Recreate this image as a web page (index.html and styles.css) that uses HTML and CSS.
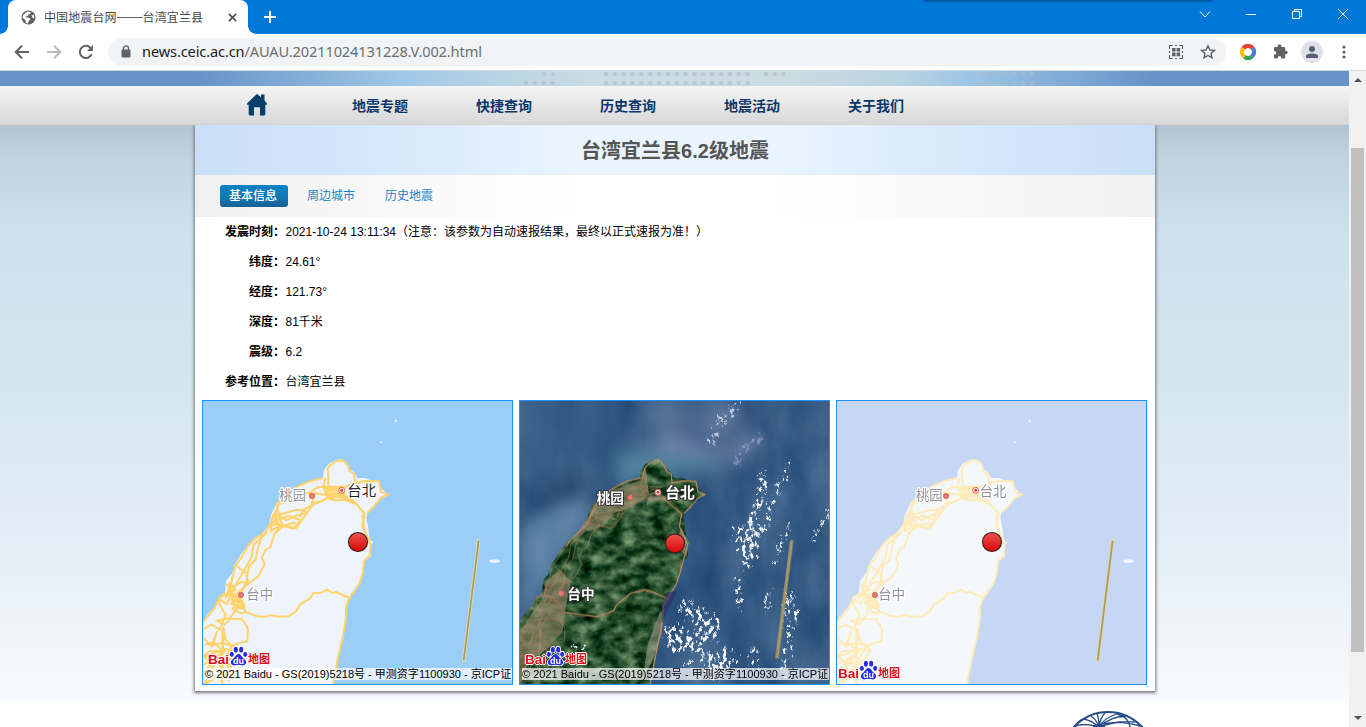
FILE: index.html
```html
<!DOCTYPE html>
<html lang="zh-CN">
<head>
<meta charset="utf-8">
<title>中国地震台网——台湾宜兰县</title>
<link rel="stylesheet" href="styles.css">
</head>
<body>
<svg class="defs" width="0" height="0" aria-hidden="true">
  <defs>
    <path id="land" d="M0 700L12 672 25 650 45 628 60 600 78 583 81 548 100 525 106 503 125 470 148 440 165 421 190 405 210 380 216 350 232 318 255 290 300 265 330 252 372 240 374 218 388 198 410 187 428 184 445 194 450 212 465 222 475 240 500 240 515 247 540 248 547 272 568 290 545 302 525 325 505 345 502 360 508 390 512 425 523 433 514 445 516 475 498 490 492 530 480 555 455 590 448 615 440 640 443 660 436 690 430 730 416 785 410 820 402 860 402 900 0 900Z"/>
    <g id="roads">
      <path d="M402 860L410 815 417 780 432 715 441 660 441 625 452 600 480 560 492 525 495 490 512 472 515 440 500 402 490 385 497 348 470 315 440 300 402 295"/>
      <path d="M505 345L525 325 545 300 568 290 546 282 540 250 500 249 468 256 466 229 450 218 448 204 437 190 418 187 396 199 386 211 388 238 388 262"/>
      <path d="M468 256L440 266 390 266 355 268 330 286 300 285 270 306 240 318 226 349 213 380 196 405 168 422 149 441 126 480 108 506 100 542 90 570 80 602"/>
      <path d="M372 240L332 250 302 262 270 285 232 318M330 290L350 286 385 292 410 308 385 300 343 320 315 335 290 336 240 350 232 318"/>
      <path d="M342 320L320 350 292 390 254 383 226 408 214 448 200 455 188 480 197 498 178 535 155 551 126 576 100 602"/>
      <path d="M226 408L246 382 284 392 304 366 270 354 240 360 252 382 216 376 248 357 222 350 264 366 292 352 324 345 310 335 304 360"/>
      <path d="M190 410L178 445 170 485 150 505 142 550 124 594 140 645"/>
      <path d="M205 403L164 440 158 478 134 520 116 550 98 583 85 560 106 565 128 551 147 556 142 525 115 506"/>
      <path d="M452 600L410 582 400 585 385 575 367 584 343 586 332 602 302 620 292 639 268 655 240 656 215 651 202 656 175 655 145 643 126 646 100 632 126 610 102 606"/>
      <path d="M12 694L37 680 62 694 80 650 60 617 62 596 85 590 110 600 138 626 114 630 93 660 52 668 76 680 94 662 130 664 147 692 145 730 121 735 98 744 78 722 74 690 72 760 45 785 16 822 41 850"/>
      <path d="M12 718L38 746 54 700 43 740 70 735 100 743 113 756 96 782 75 797 43 796 14 776 46 766 80 753 110 760"/>
      <path d="M80 756L52 790 28 840 12 860M75 790L98 804 77 835 46 818 33 798M18 740L45 733 70 758 30 760 12 775M85 575L107 600 96 618 128 625 120 601 94 592 84 618 58 602M12 672L45 632 62 600 80 585M70 690V860M98 744L75 790 110 840M12 800L50 780 90 850M40 820L72 812 66 850M16 860L60 830"/>
      <path d="M390 266L400 292 425 282 448 302 408 284 387 300 378 282 405 270 438 292 465 310M350 282L338 316 368 310 386 299M395 262L385 290 400 305 440 306 470 318M372 272L400 280 420 270 438 268M380 240L374 262 392 276"/>
    </g>
    <path id="road-knots" d="M235 330L228 370 244 384 262 380M222 350L214 400 236 386 290 374M100 535L92 590 110 612 130 608 134 632 110 626 98 604 116 598 138 622M88 555L110 575 90 585 110 590M385 270L420 272 436 285 404 298 385 285M490 350L496 400M205 385L226 382 240 368"/>
    <g id="roads-short">
      <path d="M505 345L525 325 545 300 568 290 546 282 540 250 500 249 468 256 466 229 450 218 437 190 418 187 396 199 386 211 380 240 332 250 270 285 240 318 213 380 165 423 150 446"/>
      <path d="M452 600L410 582 385 575 343 586 302 620 292 639 240 656 145 643M402 860L441 660 441 625 480 560 492 525 515 440 490 385 497 348 440 300"/>
    </g>
    <g id="hq">
      <path d="M839 428L794 787" stroke="#e4d9a2" stroke-width="10" stroke-linecap="square"/>
      <path d="M839 428L794 787" stroke="#a99a60" stroke-width="5"/>
    </g>
    <linearGradient id="red" x2="0" y2="1"><stop stop-color="#ee5550"/><stop offset="1" stop-color="#d60505"/></linearGradient>
    <g id="quake"><circle cx="477" cy="432" r="28.5" fill="url(#red)" stroke="#40201f" stroke-width="3.5"/></g>
    <g id="capital"><circle r="9" fill="#fff" stroke="#e45b55" stroke-width="3"/><circle r="4.5" fill="#e53c37"/></g>
    <g id="city"><circle r="8" fill="#e9776f" stroke="#c65d56" stroke-width="2"/></g>
    <symbol id="paw" viewBox="0 0 56 60">
      <g stroke="#fff" stroke-width="5" paint-order="stroke" fill="#282ce0" stroke-linejoin="round">
        <path d="M28 24C20 24 18 34 10 40C0 48 6 60 18 58C25 56 30 56 38 58C50 60 56 48 46 40C38 34 36 24 28 24Z"/>
        <ellipse cx="8" cy="25" rx="6" ry="8"/><ellipse cx="20" cy="11" rx="6" ry="8.5"/><ellipse cx="36" cy="11" rx="6" ry="8.5"/><ellipse cx="48" cy="25" rx="6" ry="8"/>
      </g>
    </symbol>
    <filter id="forest" x="0" y="0" width="1" height="1" color-interpolation-filters="sRGB">
      <feTurbulence type="fractalNoise" baseFrequency=".022 .034" numOctaves="5" seed="8"/>
      <feColorMatrix values=".85 0 0 0 -.26  .8 0 0 0 -.08  .7 0 0 0 -.16  0 0 0 0 1"/>
      <feComposite in2="SourceGraphic" operator="in"/>
    </filter>
    <filter id="seanoise" x="0" y="0" width="1" height="1" color-interpolation-filters="sRGB">
      <feTurbulence type="fractalNoise" baseFrequency=".008 .004" numOctaves="4" seed="4"/>
      <feColorMatrix values=".25 0 0 0 .09  .22 0 0 0 .25  .18 0 0 0 .43  0 0 0 0 1"/>
    </filter>
    <filter id="soft" x="-50%" y="-50%" width="200%" height="200%" color-interpolation-filters="sRGB"><feGaussianBlur stdDeviation="22"/></filter>
    <filter id="wisp" x="-40%" y="-40%" width="180%" height="180%" color-interpolation-filters="sRGB">
      <feTurbulence type="fractalNoise" baseFrequency=".09 .06" numOctaves="4" seed="5" result="n"/>
      <feColorMatrix in="n" values="0 0 0 0 0 0 0 0 0 0 0 0 0 0 0 8 0 0 0 -3.9" result="m"/>
      <feDisplacementMap in="SourceGraphic" in2="n" scale="50" xChannelSelector="G" yChannelSelector="B" result="d"/>
      <feComposite in="d" in2="m" operator="in"/>
    </filter>
  </defs>
</svg>

<div class="browser">
  <div class="tabstrip">
    <div class="tab">
      <svg class="favicon" viewBox="0 0 16 16"><circle cx="8" cy="8" r="7.5" fill="#5f6368"/><path d="M7 1.700L10.800 2.600 9.400 4.500 7.800 4.700 7.200 6.300 4.800 6.800 6 8.100 8.800 8.200 9.900 10 8.200 11.600 7.400 14.300 4.800 13.600 5.300 11.400 3.300 9.300 1.600 8.500 2.200 5.400zM11.300 5.700L13.600 5.100 14.300 8.700 12.200 8.200z" fill="#fff"/></svg>
      <span class="tab-title">中国地震台网<span class="dash"></span>台湾宜兰县</span>
      <svg class="tab-x" viewBox="0 0 10 10"><path d="M1 1l8 8M9 1L1 9" stroke="#45494d" stroke-width="1.700"/></svg>
    </div>
    <svg class="plus" viewBox="0 0 12 12"><path d="M6 0v12M0 6h12" stroke="#fff" stroke-width="2"/></svg>
    <div class="window-controls">
      <svg viewBox="0 0 12 12"><path d="M1 3.500L6 9l5-5.500" /></svg>
      <svg viewBox="0 0 12 12"><path d="M1 6.500h10"/></svg>
      <svg viewBox="0 0 12 12"><path d="M1.500 3.500h7v7h-7zM3.500 3.500v-2h7v7h-2"/></svg>
      <svg viewBox="0 0 12 12"><path d="M1 1l10 10M11 1L1 11"/></svg>
    </div>
    <i class="edge-shadow"></i>
  </div>
  <div class="toolbar">
    <svg class="nav-icon" viewBox="0 0 16 16"><path d="M15 8H2M8 1.700L1.700 8 8 14.300"/></svg>
    <svg class="nav-icon off" viewBox="0 0 16 16"><path d="M1 8h13M8 1.700L14.300 8 8 14.300"/></svg>
    <svg class="nav-icon" viewBox="0 0 16 16"><path d="M13.600 10.200A6.100 6.100 0 1 1 12.500 3.900"/><path d="M14.900 1v6H9z" fill="#5f6368" stroke="none"/></svg>
    <div class="address">
      <svg class="lock" viewBox="0 0 10 13"><path d="M1 5h8v7H1z" fill="#5f6368" stroke="#5f6368" stroke-linejoin="round"/><path d="M2.500 5V3.400a2.500 2.500 0 0 1 5 0V5" fill="none" stroke="#5f6368" stroke-width="1.400"/></svg>
      <span class="url"><b>news.ceic.ac.cn</b>/AUAU.20211024131228.V.002.html</span>
      <svg class="qr" viewBox="0 0 16 16"><path d="M1.500 5V1.500H5M7 1.500h2M11 1.500h3.500V5M14.500 7v2M14.500 11v3.500H11M9 14.500H7M5 14.500H1.500V11M1.500 9V7" fill="none" stroke="#5f6368" stroke-width="1.200"/><path d="M4 4h3.600v3.600H4zM8.600 4h3.600v3.600H8.600zM4 8.600h3.600v3.600H4zM8.600 8.600h3.600v3.600H8.600z" fill="#5f6368"/></svg>
      <svg class="star" viewBox="0 0 16 16"><path d="M8 1.800l1.900 4.200 4.600.4-3.500 3 1 4.500L8 11.500l-4 2.400 1-4.500-3.500-3 4.600-.4z" fill="none" stroke="#5f6368" stroke-width="1.400"/></svg>
    </div>
    <svg class="ring" viewBox="0 0 16 16" fill="none" stroke-width="4.200"><path d="M3.200 4.300A6 6 0 0 1 12.800 4.300" stroke="#e04235"/><path d="M12.800 4.300A6 6 0 0 1 11.600 12.800" stroke="#477dca"/><path d="M11.600 12.800A6 6 0 0 1 4.400 12.800" stroke="#35a452"/><path d="M4.400 12.800A6 6 0 0 1 3.200 4.300" stroke="#fbc01a"/></svg>
    <svg class="puzzle" viewBox="0 0 16 16"><path d="M1 4.500q0-1.200 1.200-1.200H5q-.2-3 2-3t2 3h2.800q1.200 0 1.200 1.200V7.200q2.700-.2 2.700 1.800T13 10.900v3.300q0 1.200-1.200 1.200H9q.1-2.700-2-2.700t-2 2.700H2.200Q1 15.400 1 14.200v-2.900q2.600 0 2.600-2T1 7.400z" fill="#5f6368"/></svg>
    <div class="avatar"><svg viewBox="0 0 14 14"><circle cx="7" cy="4" r="3" fill="#566275"/><path d="M1 13v-1.800Q1 8.500 7 8.500t6 2.700V13z" fill="#566275"/></svg></div>
    <svg class="dots" viewBox="0 0 4 14" fill="#5f6368"><circle cx="2" cy="2" r="1.600"/><circle cx="2" cy="7" r="1.600"/><circle cx="2" cy="12" r="1.600"/></svg>
  </div>

  <div class="viewport">
    <div class="page">
      <div class="banner">
        <svg viewBox="0 0 1349 15" fill="none" stroke="#b7bfc6" stroke-opacity=".7" stroke-width="4" stroke-dasharray="4 4.850">
          <path d="M542 3h14M604 3h147M764 3h23"/><path d="M524 12h31M604 12h147"/><path d="M968 3h67M977 12h58" stroke-opacity=".4"/>
        </svg>
      </div>
      <nav class="menu">
        <svg class="home" viewBox="0 0 20 23"><path d="M14 1.500h3.500v6L20 10.400v1.300h-1.700V21q0 1.500-1.500 1.500H13v-8.200H7v8.200H3.200q-1.500 0-1.500-1.500v-9.300H0v-1.300L9.500 1.300h1L14 4.300z" fill="#04406b"/></svg>
        <a>地震专题</a><a>快捷查询</a><a>历史查询</a><a>地震活动</a><a>关于我们</a>
      </nav>
      <div class="backdrop">
        <main class="panel">
          <h1>台湾宜兰县6.2级地震</h1>
          <div class="subtabs"><a class="active">基本信息</a><a>周边城市</a><a>历史地震</a></div>
          <dl class="facts">
            <dt>发震时刻：</dt><dd>2021-10-24 13:11:34（注意：该参数为自动速报结果，最终以正式速报为准！）</dd>
            <dt>纬度：</dt><dd>24.61°</dd>
            <dt>经度：</dt><dd>121.73°</dd>
            <dt>深度：</dt><dd>81千米</dd>
            <dt>震级：</dt><dd>6.2</dd>
            <dt>参考位置：</dt><dd>台湾宜兰县</dd>
          </dl>
          <div class="maps">
            <div class="map street">
              <svg class="chart" viewBox="0 0 309 283"><g transform="translate(-4 -3) scale(.33333)">
                <use href="#land" class="land"/><use href="#roads" class="roads"/><use href="#road-knots" class="roads"/>
                <path d="M588 65l6 3-5 4zM544 130l5 2-4 3z" fill="#eff3fb" stroke="#eff3fb" stroke-width="2"/><ellipse cx="887" cy="489" rx="16" ry="5.500" fill="#eff3fb"/>
                <use href="#hq"/>
                <use href="#capital" x="428" y="277"/><use href="#city" x="339" y="294"/><use href="#city" x="126" y="591"/>
                <g class="label"><text x="241" y="307">桃园</text><text class="major" x="445" y="295">台北</text><text x="142" y="604">台中</text></g>
                <use href="#quake"/>
              </g></svg>
              <div class="logo"><span>Bai</span><i><svg><use href="#paw"/></svg><em>du</em></i><span class="cn">地图</span></div>
              <div class="copyright">© 2021 Baidu - GS(2019)5218号 - 甲测资字1100930 - 京ICP证</div>
            </div>
            <div class="map satellite">
              <svg class="chart" viewBox="0 0 309 283"><g transform="translate(-4 -3) scale(.33333)">
                <rect x="12" y="9" width="930" height="850" filter="url(#seanoise)"/>
                <g filter="url(#soft)">
                  <path d="M12 390L90 345 190 300 230 340 120 520 12 680Z" fill="#739abb" opacity=".6"/>
                  <path d="M300 150L420 170 580 160 610 215 480 220 300 260Z" fill="#5b91a7" opacity=".7"/>
                  <path d="M400 9L690 9 720 160 620 210 420 150Z" fill="#65789a" opacity=".55"/>
                  <path d="M120 230L220 240 200 300 60 320Z" fill="#263d67" opacity=".45"/>
                  <path d="M12 9H300V200L120 240 12 250Z" fill="#356088" opacity=".5"/>
                </g>
                <use href="#land" filter="url(#forest)"/>
                <path d="M240 320L275 283 380 243 390 210 398 290 350 325 295 345 260 385 210 400 170 425ZM90 550L130 515 165 550 150 625 140 700 95 750 40 790 12 860V700L80 600Z" fill="#a08d72" opacity=".6"/>
                <path d="M398 295L450 298 390 320ZM478 445L495 390 512 420 512 475ZM430 645L445 640 437 710 412 780 380 845 395 740Z" fill="#a5a194" opacity=".55"/>
                <use href="#roads" class="satellite-roads"/><use href="#roads-short" class="satellite-roads strong"/>
                <g filter="url(#soft)" fill="none" stroke="#9aa3cf" stroke-width="26" opacity=".55">
                  <path d="M420 160L480 135 560 165M655 190L675 155 730 112M352 110L345 140M600 85L650 30"/>
                </g>
                <g filter="url(#wisp)" fill="none" stroke="#f4f5fd">
                  <path d="M600 85L640 48 664 20M578 133l25-20" stroke-width="20" opacity=".7"/>
                  <path d="M655 205L675 160 738 112" stroke-width="20" opacity=".3"/>
                  <path d="M742 225L732 300 708 370 668 425" stroke-width="20"/>
                  <path d="M824 188L795 260 760 330 744 405" stroke-width="12"/>
                  <path d="M655 405L725 400 700 445" stroke-width="34"/>
                  <path d="M665 440L710 455 690 505" stroke-width="30"/>
                  <path d="M668 540l0 90" stroke-width="14"/>
                  <path d="M760 575l-8 80M937 330L890 430M825 385L785 460M775 500l25-80" stroke-width="7"/>
                  <path d="M495 620L590 680 540 740 458 735 580 710 540 640" stroke-width="40"/>
                  <path d="M458 683l75 55M555 785l85-20M565 820l60-20-25 40" stroke-width="34"/>
                  <path d="M710 745v70M815 740l-10 100" stroke-width="16"/>
                  <path d="M810 575l10 150M830 595l15 80M505 790l25 10" stroke-width="14"/>
                  <path d="M160 745l50 25M170 790l30-40" stroke-width="22"/>
                </g>
                <path d="M455 582L483 580 438 675 438 625Z" fill="#322e61" opacity=".65"/>
                <path d="M827 427L783 780" stroke="#c5ad69" stroke-width="9"/><path d="M827 427L783 780" stroke="#94865a" stroke-width="3"/>
                <use href="#capital" x="426" y="283"/><use href="#city" x="343" y="298"/><use href="#city" x="136" y="586"/>
                <g class="label"><text x="242" y="314">桃园</text><text class="major" x="448" y="300">台北</text><text x="154" y="602">台中</text></g>
                <use href="#quake" y="4"/>
              </g></svg>
              <div class="logo"><span>Bai</span><i><svg><use href="#paw"/></svg><em>du</em></i><span class="cn">地图</span></div>
              <div class="copyright">© 2021 Baidu - GS(2019)5218号 - 甲测资字1100930 - 京ICP证</div>
            </div>
            <div class="map light">
              <svg class="chart" viewBox="0 0 309 283"><g transform="translate(-4 -3) scale(.33333)">
                <use href="#land" class="land"/><use href="#roads" class="roads"/><use href="#road-knots" class="roads"/>
                <path d="M588 65l6 3-5 4zM544 130l5 2-4 3z" fill="#f5f8fb" stroke="#f5f8fb" stroke-width="2"/><ellipse cx="887" cy="489" rx="16" ry="5.500" fill="#f5f8fb"/>
                <use href="#hq"/>
                <use href="#capital" x="428" y="277"/><use href="#city" x="339" y="294"/><use href="#city" x="126" y="591"/>
                <g class="label"><text x="249" y="307">桃园</text><text x="440" y="294">台北</text><text x="136" y="603">台中</text></g>
                <use href="#quake"/>
              </g></svg>
              <div class="logo"><span>Bai</span><i><svg><use href="#paw"/></svg><em>du</em></i><span class="cn">地图</span></div>
            </div>
          </div>
        </main>
      </div>
      <footer>
        <svg viewBox="0 0 78 16" fill="none" stroke="#244b86" stroke-width="1.300"><circle cx="39" cy="47" r="46" stroke-width="2"/><path d="M30 16Q22 9 14 8M30 16Q27 8 22 5M30 16Q30 7 28 3M30 16Q31 7 36 2M30 16Q35 7 48 3M30 16Q43 5 57 5M30 16Q50 9 66 11M4 16Q14 11 30 16M30 14Q50 8 74 16M48 3Q60 6 61 16M14 8Q9 10 5 16"/><path d="M24 14h12v3H24z" fill="#244b86" stroke="none"/></svg>
      </footer>
    </div>
    <div class="scrollbar"><svg viewBox="0 0 17 17"><path d="M5 11h8L9 7z" fill="#505050"/></svg><div class="thumb"></div><svg viewBox="0 0 17 17"><path d="M5 6h8l-4 4z" fill="#505050"/></svg></div>
  </div>
</div>
</body>
</html>
```
FILE: styles.css
```css
* { box-sizing: border-box; }
html, body { margin: 0; height: 100%; overflow: hidden; }
body { font: 12px/1 "Liberation Sans", "Noto Sans CJK SC", sans-serif; color: #000; text-spacing-trim: space-all; }
svg { display: block; flex: none; }
.defs { position: absolute; }
.browser { width: 1366px; height: 727px; display: flex; flex-direction: column; background: #fff; }

.tabstrip { height: 34px; background: #0078d7; display: flex; align-items: center; padding-left: 8px; position: relative; flex: none; }
.edge-shadow { position: absolute; left: 924px; top: 0; width: 288px; height: 1px; background: #00569d; box-shadow: 0 1px 2px #004f94; }
.tab { position: relative; width: 240px; height: 34px; background: #fff; border-radius: 8px 8px 0 0; display: flex; align-items: center; padding: 0 10px 0 13px; }
.tab::before, .tab::after { content: ""; position: absolute; bottom: 0; width: 8px; height: 8px; }
.tab::before { left: -8px; background: radial-gradient(circle at 0 0, transparent 7.5px, #fff 8px); }
.tab::after { right: -8px; background: radial-gradient(circle at 100% 0, transparent 7.5px, #fff 8px); }
.favicon { width: 15px; height: 15px; }
.tab-title { margin-left: 8px; flex: 1; color: #45494d; white-space: nowrap; font-family: "Noto Sans CJK SC", sans-serif; letter-spacing: .1px; }
.dash { display: inline-block; width: 26px; height: 1px; background: #5d6165; vertical-align: 4px; }
.tab-x { width: 9px; height: 9px; margin-right: 1px; }
.plus { width: 12px; height: 12px; margin-left: 16px; }
.window-controls { margin-left: auto; display: flex; gap: 34px; padding: 0 17px 6px 0; }
.window-controls svg { width: 12px; height: 12px; fill: none; stroke: #fff; stroke-width: 1; }

.toolbar { height: 37px; flex: none; display: flex; align-items: center; padding: 0 0 1px 14px; border-bottom: 1px solid #d7d8da; }
.nav-icon { width: 16px; height: 16px; margin-right: 16px; fill: none; stroke: #5f6368; stroke-width: 2; }
.nav-icon.off { stroke: #b9bbbe; }
.nav-icon:nth-child(3) { margin-right: 14px; }
.address { width: 1118px; height: 28px; border-radius: 14px; background: #f1f3f4; display: flex; align-items: center; padding: 0 10px 0 13px; }
.lock { width: 10px; height: 13px; margin-right: 11px; }
.url { flex: 1; font: 14.6px/26px "Noto Sans", sans-serif; height: 28px; color: #6b6f73; white-space: nowrap; letter-spacing: -.13px; }
.url b { font-weight: 400; color: #202124; }
.qr { width: 16px; height: 16px; margin-right: 16px; }
.star { width: 16px; height: 16px; }
.ring { width: 16px; height: 16px; margin-left: 14px; }
.puzzle { width: 15px; height: 15px; margin-left: 17px; }
.avatar { width: 22px; height: 22px; border-radius: 50%; background: #dfe1e7; margin-left: 13px; display: grid; place-items: center; }
.avatar svg { width: 14px; height: 14px; }
.dots { width: 4px; height: 14px; margin-left: 19px; }

.viewport { flex: 1; display: flex; min-height: 0; }
.page { width: 1349px; overflow: hidden; }
.banner { height: 15px; background: linear-gradient(90deg, #6792c8 195px, #9fc7e6 400px, #b9d4e4 500px, #c8dce3 590px, #cbdce1 790px, #b8d3e2 905px, #9cc5e6 970px, #6792c8 1155px); }
.menu { height: 39px; display: flex; align-items: center; padding-left: 247px; background: linear-gradient(#f5f5f5, #d8d8d8); border-bottom: 1px solid #d0d3d5; }
.home { width: 20px; height: 23px; margin: -1px 51px 0 0; }
.menu a { width: 124px; text-align: center; font: 700 14px/38px "Noto Sans CJK SC", sans-serif; color: #0b3768; }
.backdrop { height: 577px; padding-left: 195px; background: linear-gradient(#b2c4d2, #c0d2df 30px, #cde1ed 105px, #d3e5ef 240px, #e4eff6 430px, #f8fbff); }
.panel { width: 960px; height: 566px; background: #fff; box-shadow: 0 1px 3px 1px #777; clip-path: inset(0 -6px -7px -6px); }
.panel h1 { margin: 0; height: 50px; text-align: center; font: 700 20px/52px "Liberation Sans", "Noto Sans CJK SC", sans-serif; color: #555; background: linear-gradient(90deg, #c9dff7, #d5e7fb 18%, #e9f4ff 40%, #e9f4ff 60%, #d5e7fb 82%, #c9dff7); }
.subtabs { height: 42px; display: flex; align-items: center; padding-left: 25px; gap: 10px; background: linear-gradient(90deg, #f1f1f1, #fff 40%, #fff 60%, #f1f1f1); }
.subtabs a { width: 68px; height: 22px; padding-right: 2px; text-align: center; font: 12px/20px "Noto Sans CJK SC", sans-serif; color: #1784c7; border-radius: 3px; }
.subtabs .active { color: #fff; font-weight: 500; background: linear-gradient(#0b82c5, #1277b3 60%, #175f90); }
.facts { margin: 0; height: 183px; display: grid; grid-template-columns: 90px 1fr; grid-auto-rows: 30px; line-height: 30px; }
.facts dt { text-align: right; font-weight: 700; }
.facts dd { margin: 0; padding-left: .5px; }
.maps { display: flex; gap: 6px; padding-left: 7px; }
.map { position: relative; width: 311px; height: 285px; border: 1px solid #1e90ff; overflow: hidden; }
.chart { width: 309px; height: 283px; }
.land { fill: #eff3fb; }
.roads { fill: none; stroke: #ffd36a; stroke-width: 6; stroke-linejoin: round; }
.street { background: #9bcdf9; }
.light { background: #c5d7f5; }
.light .land { fill: #f5f8fa; }
.light .roads { stroke: #ffebb9; }
.satellite { background: #385d89; }
.satellite-roads { fill: none; stroke: #b78361; stroke-width: 2.5; opacity: .65; stroke-linejoin: round; }
.satellite-roads.strong { stroke: #c28e61; stroke-width: 3.5; opacity: .9; }
.label { font: 40px "Noto Sans CJK SC", sans-serif; fill: #929397; stroke: #fff; stroke-width: 7px; paint-order: stroke; stroke-linejoin: round; }
.label .major { font-size: 43px; fill: #222; }
.satellite .label { font-size: 41px; font-weight: 700; fill: #fff; stroke: #333; stroke-width: 6px; }
.satellite .label .major { fill: #fff; font-size: 44px; }
.logo { position: absolute; left: 5px; bottom: 17px; height: 21px; display: flex; align-items: flex-end; color: #e10b18; text-shadow: 1px 0 #fff, -1px 0 #fff, 0 1px #fff, 0 -1px #fff; }
.logo span { font: 700 13.5px/14px "Liberation Sans", sans-serif; }
.logo .cn { font: 700 11px/17px "Noto Sans CJK SC", sans-serif; }
.logo i { position: relative; width: 19px; height: 21px; margin: 0; }
.logo i svg { width: 19px; height: 20px; overflow: visible; }
.logo em { position: absolute; left: 4px; bottom: 1px; font: 700 9px/10px "Liberation Sans", sans-serif; color: #fff; text-shadow: none; }
.light .logo { left: 1px; bottom: 3px; }
.copyright { position: absolute; left: 2px; right: 0; bottom: 4px; height: 12px; background: rgba(255, 255, 255, .7); font-size: 11px; line-height: 12px; white-space: nowrap; letter-spacing: .01px; }
footer { height: 25px; background: #fff; padding: 9px 0 0 1069px; }
footer svg { width: 78px; height: 16px; }
.scrollbar { width: 17px; background: #f1f1f1; display: flex; flex-direction: column; align-items: center; justify-content: space-between; }
.scrollbar svg { width: 17px; height: 17px; }
.thumb { width: 13px; height: 504px; margin-top: 0; background: #c1c1c1; transform: translateY(1px); }
```
